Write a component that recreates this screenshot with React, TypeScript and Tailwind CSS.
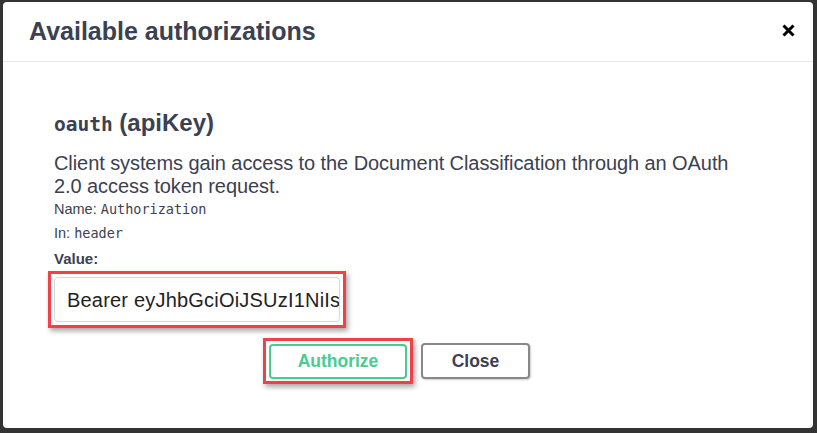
export default function App() {
  return (
    <div className="w-[817px] h-[433px] bg-[#333333] pt-[2px] pl-[3px] pr-[4px] pb-[5px]" style={{ fontFamily: '"Liberation Sans", Arial, sans-serif' }}>
      <div className="bg-white rounded-[4px] h-full flex flex-col">
        <div className="h-[60px] flex items-center justify-between pl-[26px] pr-[18px] border-b border-[#ebebeb] shrink-0">
          <h3 className="text-[25px] font-bold text-[#3b4151] leading-none">Available authorizations</h3>
          <svg width="13" height="13" viewBox="0 0 13 13" className="mt-[-3px]">
            <path d="M1.5 1.5 L11.5 11.5 M11.5 1.5 L1.5 11.5" stroke="#000" strokeWidth="3" strokeLinecap="butt" />
          </svg>
        </div>
        <div className="pl-[51px] flex flex-col text-[#3b4151]">
          <h4 className="mt-[49px] h-[24px] leading-[24px] text-[24px] font-bold whitespace-pre">
            <code className="text-[19.5px]" style={{ fontFamily: '"DejaVu Sans Mono", monospace' }}>oauth</code> (apiKey)
          </h4>
          <p className="mt-[17px] text-[20px] tracking-[-0.08px] leading-[23px] w-[690px]">
            Client systems gain access to the Document Classification through an OAuth 2.0 access token request.
          </p>
          <div className="mt-[1px] h-[20px] leading-[20px] text-[14.5px]">
            Name: <code className="text-[13.5px]" style={{ fontFamily: '"DejaVu Sans Mono", monospace' }}>Authorization</code>
          </div>
          <div className="mt-[4px] h-[20px] leading-[20px] text-[14.5px]">
            In: <code className="text-[13.5px]" style={{ fontFamily: '"DejaVu Sans Mono", monospace' }}>header</code>
          </div>
          <div className="mt-[6px] h-[20px] leading-[20px] text-[15px] font-bold">Value:</div>
          <div className="ml-[-6px] mt-[2px] w-[298px] h-[57px] border-[3px] border-[#f0404a] pl-[3px] pt-[3px] shadow-[2px_3px_5px_rgba(0,0,0,0.35)]">
            <div className="w-[286px] h-[45px] border border-[#d9d9d9] rounded-[4px] pl-[12px] flex items-center overflow-hidden whitespace-nowrap text-[20px] tracking-[0.2px] text-[#222]">
              Bearer eyJhbGciOiJSUzI1NiIsInR5cCI6IkpXVCJ9
            </div>
          </div>
        </div>
        <div className="flex items-center mt-[10px] pl-[260px]">
          <div className="w-[150px] h-[46px] border-[3px] border-[#f0404a] flex items-center justify-center shadow-[2px_3px_5px_rgba(0,0,0,0.35)]">
            <button className="w-[138px] h-[35px] border-2 border-[#49cc90] rounded-[4px] text-[17.5px] font-bold text-[#49cc90] bg-white">Authorize</button>
          </div>
          <button className="ml-[8px] w-[109px] h-[36px] border-2 border-[#888888] rounded-[4px] text-[17.5px] font-bold text-[#3b4151] bg-white shadow-[1px_1px_2px_rgba(0,0,0,0.2)]">Close</button>
        </div>
      </div>
    </div>
  );
}
